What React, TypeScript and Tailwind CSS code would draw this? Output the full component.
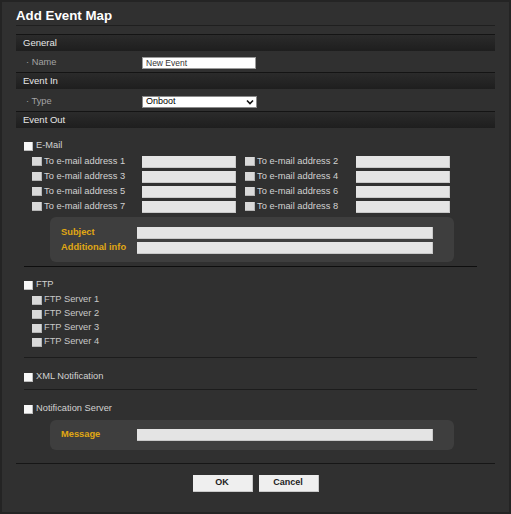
import React from "react";

const font = { fontFamily: '"Liberation Sans", Arial, sans-serif' };

function Header({ title }: { title: string }) {
  return (
    <div className="h-[17px] border-t border-[#141414] bg-linear-to-b from-[#2b2b2b] to-[#1e1e1e] pl-[7px] flex items-center text-[9.5px] text-[#e6e6e6]">
      {title}
    </div>
  );
}

function MainBox() {
  return <span className="w-[9px] h-[9px] bg-[#f8f8f8] border-r border-b border-[#bdbdbd] shrink-0" />;
}

function SubBox() {
  return <span className="w-[10px] h-[9px] bg-[#d9d9d9] border-r border-b border-[#b5b5b5] shrink-0" />;
}

function MainCheck({ label }: { label: string }) {
  return (
    <div className="h-[14px] pl-[8px] flex items-center gap-[3px] text-[9.3px] text-[#d2d2d2]">
      <MainBox />
      <span>{label}</span>
    </div>
  );
}

function GrayInput({ w }: { w: string }) {
  return <div className={`${w} h-[12px] bg-[#e4e4e4] border-b border-r border-[#c8c8c8]`} />;
}

function Sep({ cls }: { cls: string }) {
  return <div className={cls} />;
}

export default function App() {
  const emails = [
    [1, 2],
    [3, 4],
    [5, 6],
    [7, 8],
  ];
  return (
    <div
      style={font}
      className="w-[511px] h-[514px] bg-[#303030] border-2 border-[#242424] px-[14px] flex flex-col overflow-hidden"
    >
      <div className="h-[24px] pt-[5px] border-b border-[#1f1f1f] flex items-start shrink-0">
        <span className="text-[13.3px] leading-[18px] font-bold text-white">Add Event Map</span>
      </div>
      <div className="mt-[8px] shrink-0">
        <Header title="General" />
        <div className="h-[21px] pt-[3px] flex items-center">
          <div className="w-[126px] pl-[10px] text-[9.3px] text-[#a3a3a3]">· Name</div>
          <div className="w-[114px] h-[12px] bg-white border border-[#9a9a9a] flex items-center pl-[3px] text-[8.5px] text-[#333]">
            New Event
          </div>
        </div>
        <Header title="Event In" />
        <div className="h-[22px] pt-[3px] flex items-center">
          <div className="w-[126px] pl-[10px] text-[9.3px] text-[#a3a3a3]">· Type</div>
          <div className="w-[115px] h-[12px] bg-white border border-[#8a8a8a] flex items-center justify-between pl-[3px] pr-[2px] text-[9px] text-black">
            <span>Onboot</span>
            <svg width="8" height="6" viewBox="0 0 8 6">
              <path d="M1 1.5 L4 4.5 L7 1.5" fill="none" stroke="#111" strokeWidth="1.6" />
            </svg>
          </div>
        </div>
        <Header title="Event Out" />
      </div>

      <div className="mt-[11px] shrink-0">
        <MainCheck label="E-Mail" />
      </div>
      <div className="mt-[1px] ml-[16px] flex flex-col shrink-0">
        {emails.map(([a, b]) => (
          <div key={a} className="h-[15px] flex items-center text-[9.3px] text-[#d2d2d2]">
            <div className="w-[110px] flex items-center gap-[2px]">
              <SubBox />
              <span>To e-mail address {a}</span>
            </div>
            <GrayInput w="w-[94px]" />
            <div className="w-[111px] ml-[9px] flex items-center gap-[2px]">
              <SubBox />
              <span>To e-mail address {b}</span>
            </div>
            <GrayInput w="w-[94px]" />
          </div>
        ))}
      </div>
      <div className="mt-[3px] ml-[34px] w-[404px] h-[45px] rounded-[6px] bg-[#3e3e3e] pt-[8px] pl-[11px] shrink-0">
        {["Subject", "Additional info"].map((l) => (
          <div key={l} className="h-[15px] flex items-center">
            <div className="w-[76px] text-[9.3px] font-bold text-[#e0a813]">{l}</div>
            <GrayInput w="w-[296px]" />
          </div>
        ))}
      </div>

      <Sep cls="mt-[4px] ml-[8px] w-[453px] h-px bg-[#0e0e0e] shrink-0" />

      <div className="mt-[11px] shrink-0">
        <MainCheck label="FTP" />
      </div>
      <div className="mt-[1px] ml-[16px] flex flex-col shrink-0">
        {[1, 2, 3, 4].map((n) => (
          <div key={n} className="h-[14px] flex items-center gap-[2px] text-[9.3px] text-[#c8c8c8]">
            <SubBox />
            <span>FTP Server {n}</span>
          </div>
        ))}
      </div>

      <Sep cls="mt-[8px] ml-[8px] w-[453px] h-px bg-[#1c1c1c] shrink-0" />
      <div className="mt-[12px] shrink-0">
        <MainCheck label="XML Notification" />
      </div>
      <Sep cls="mt-[5px] ml-[8px] w-[453px] h-px bg-[#1c1c1c] shrink-0" />
      <div className="mt-[12px] shrink-0">
        <MainCheck label="Notification Server" />
      </div>
      <div className="mt-[4px] ml-[34px] w-[404px] h-[30px] rounded-[6px] bg-[#3e3e3e] pl-[11px] flex items-center shrink-0">
        <div className="w-[76px] text-[9.3px] font-bold text-[#e0a813]">Message</div>
        <GrayInput w="w-[296px]" />
      </div>

      <Sep cls="mt-[13px] w-full h-px bg-[#161616] shrink-0" />

      <div className="mt-[11px] flex justify-center gap-[6px] shrink-0">
        <button className="w-[60px] h-[17px] bg-[#efefef] border-b border-r border-[#c9c9c9] text-[9px] font-bold text-[#222]">
          OK
        </button>
        <button className="w-[60px] h-[17px] bg-[#efefef] border-b border-r border-[#c9c9c9] text-[9px] font-bold text-[#222]">
          Cancel
        </button>
      </div>
    </div>
  );
}
